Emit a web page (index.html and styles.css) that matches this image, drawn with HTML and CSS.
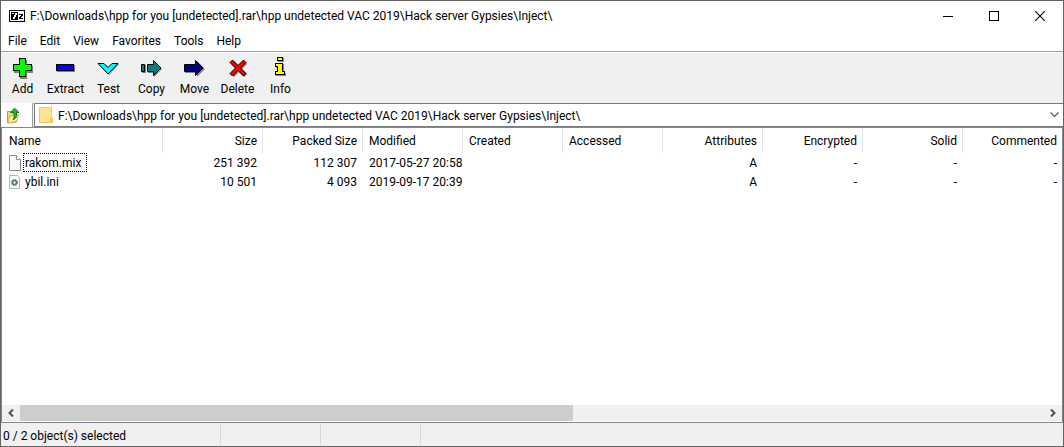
FILE: index.html
```html
<!DOCTYPE html>
<html lang="en">
<head>
<meta charset="utf-8">
<title>7-Zip File Manager</title>
<link rel="stylesheet" href="styles.css">
</head>
<body>
<div class="window">
  <header class="titlebar">
    <svg class="app-icon" width="16" height="12" viewBox="0 0 16 12" shape-rendering="crispEdges">
      <path fill="#000" d="M0 0h16v12H0z"/>
      <path fill="#fff" d="M1 1h14v10H1z"/>
      <path fill="#000" d="M2 2h7v8H2z"/>
      <path fill="#fff" d="M3 3h2v1H3zM6 3h2v2H7v2H6v2H4V7h1V5h1z"/>
      <path fill="#000" d="M10 4h4v2h-1v1h-1v1h2v1h-4V7h1V6h1V5h-2z"/>
    </svg>
    <h1 class="title">F:\Downloads\hpp for you [undetected].rar\hpp undetected VAC 2019\Hack server Gypsies\Inject\</h1>
    <div class="caption-buttons">
      <button class="caption" type="button" aria-label="Minimize"><svg width="10" height="10" viewBox="0 0 10 10" shape-rendering="crispEdges"><path d="M0 5h10v1H0z"/></svg></button>
      <button class="caption" type="button" aria-label="Maximize"><svg width="10" height="10" viewBox="0 0 10 10" shape-rendering="crispEdges"><path d="M.5.5h9v9h-9z" fill="none" stroke="#000"/></svg></button>
      <button class="caption" type="button" aria-label="Close"><svg width="10" height="10" viewBox="0 0 10 10"><path d="M0 0l10 10M10 0L0 10" fill="none" stroke="#000" stroke-width="1.1"/></svg></button>
    </div>
  </header>
  <nav class="menubar">
    <button class="menu" type="button">File</button>
    <button class="menu" type="button">Edit</button>
    <button class="menu" type="button">View</button>
    <button class="menu" type="button">Favorites</button>
    <button class="menu" type="button">Tools</button>
    <button class="menu" type="button">Help</button>
  </nav>
  <div class="toolbar">
    <button class="tool" type="button">
      <svg width="24" height="24" viewBox="1 0 24 24" shape-rendering="crispEdges"><path fill="#808080" d="M10 4h7v6h6v7h-6v6h-7v-6H4v-7h6z"/><path fill="#0f0" stroke="#000" d="M9.500 2.500h6v6h6v6h-6v6h-6v-6h-6v-6h6z"/></svg>Add</button>
    <button class="tool" type="button">
      <svg width="24" height="24" viewBox="1 0 24 24" shape-rendering="crispEdges"><path fill="#808080" d="M4 9h18v7H4z"/><path fill="#00f" stroke="#000" d="M3.500 8.500h17v6h-17z"/></svg>Extract</button>
    <button class="tool" type="button">
      <svg width="24" height="24" viewBox="1 0 24 24"><path fill="#808080" d="M3 8h6l4 4 4-4h6L13 19z"/><path fill="#0ff" stroke="#000" d="M2 7.500h6l4 4 4-4h6L12 18z"/></svg>Test</button>
    <button class="tool" type="button">
      <svg width="24" height="24" viewBox="1 0 24 24"><path fill="#808080" d="M3 9h4v8H3zM9 9h6V5l8 8-8 8v-4H9z"/><path fill="#008080" stroke="#000" d="M2.500 8.500h3v7h-3zM8.500 8.500h6v-4l7.500 7.500-7.500 7.500v-4h-6z"/></svg>Copy</button>
    <button class="tool" type="button">
      <svg width="24" height="24" viewBox="1 0 24 24"><path fill="#808080" d="M3 9h12V5l8 8-8 8v-4H3z"/><path fill="#000080" stroke="#000" d="M2.500 8.500h11v-4l7.500 7.500-7.500 7.500v-4h-11z"/></svg>Move</button>
    <button class="tool" type="button">
      <svg width="24" height="24" viewBox="0 0 24 24"><path fill="#808080" d="M8 5l5 5 5-5 3 3-5 5 5 5-3 3-5-5-5 5-3-3 5-5-5-5z"/><path fill="#f00" stroke="#000" d="M6.500 4L12 9.500 17.500 4 20 6.500 14.500 12l5.500 5.500-2.500 2.500-5.500-5.500L6.500 20 4 17.500 9.500 12 4 6.500z"/></svg>Delete</button>
    <button class="tool" type="button">
      <svg width="24" height="24" viewBox="1 0 24 24" shape-rendering="crispEdges"><path fill="#808080" d="M10 2h6v4h-6zM8 8h8v9h2v3H8v-3h2v-5H8z"/><path fill="#ff0" stroke="#000" d="M9.500 1.500h5v3h-5zM7.500 7.500h7v8h2v3h-9v-3h2v-5h-2z"/></svg>Info</button>
  </div>
  <div class="addressbar">
    <button class="up" type="button" aria-label="Up one level">
      <svg width="16" height="17" viewBox="0 0 16 17"><path fill="#f5d66c" stroke="#c79a35" d="M1.500 4.500h4l1 1.500h4v9l-9 1z"/><path fill="#ffedaa" stroke="#dcb453" d="M3.500 9.500l9-2-1.500 6.500-9 2z"/><path fill="#2eae2b" stroke="#087d18" d="M8.500 1.200l4.500 4.300h-2.500c.5 4-.5 6.500-3.500 7 1.500-1.500 1.500-4 .5-7H4.500z"/></svg>
    </button>
    <div class="combo">
      <svg width="14" height="17" viewBox="0 0 14 17"><path fill="#f0cb62" d="M0 0h13v11h1v5H0z"/><path fill="#ffe391" d="M1 1h11v10h-1v4H1z"/></svg>
      <input class="path" type="text" aria-label="Address" value="F:\Downloads\hpp for you [undetected].rar\hpp undetected VAC 2019\Hack server Gypsies\Inject\">
      <button class="drop" type="button" aria-label="Show history"><svg width="9" height="6" viewBox="0 0 9 6"><path d="M.5.5l4 4 4-4" fill="none" stroke="#555" stroke-width="1.2"/></svg></button>
    </div>
  </div>
  <main class="list">
    <table class="files">
      <colgroup><col class="c-name"><col class="c"><col class="c"><col class="c"><col class="c"><col class="c"><col class="c"><col class="c"><col class="c"><col></colgroup>
      <thead>
        <tr><th>Name</th><th class="r">Size</th><th class="r">Packed Size</th><th>Modified</th><th>Created</th><th>Accessed</th><th class="r">Attributes</th><th class="r">Encrypted</th><th class="r">Solid</th><th class="r">Commented</th></tr>
      </thead>
      <tbody>
        <tr>
          <td><div class="file"><svg width="12" height="16" viewBox="0 0 12 16"><path fill="#fafafa" stroke="#8c8c8c" d="M.5.500h7l4 4v11H.5z"/><path fill="#fff" stroke="#8c8c8c" d="M7.500.500v4h4"/></svg><span class="name focused">rakom.mix</span></div></td>
          <td class="r">251 392</td><td class="r">112 307</td><td>2017-05-27 20:58</td><td></td><td></td><td class="r">A</td><td class="r">-</td><td class="r">-</td><td class="r">-</td>
        </tr>
        <tr>
          <td><div class="file"><svg width="12" height="16" viewBox="0 0 12 16"><path fill="#f7f8f8" stroke="#b4b8ba" d="M.5 1.500h8l2 2v11H.5z"/><circle cx="5.500" cy="8.500" r="2" fill="none" stroke="#587078" stroke-width="1.600"/><circle cx="5.500" cy="8.500" r="3.200" fill="none" stroke="#587078" stroke-dasharray="1.250 1.250"/></svg><span class="name">ybil.ini</span></div></td>
          <td class="r">10 501</td><td class="r">4 093</td><td>2019-09-17 20:39</td><td></td><td></td><td class="r">A</td><td class="r">-</td><td class="r">-</td><td class="r">-</td>
        </tr>
      </tbody>
    </table>
    <div class="scrollbar">
      <button class="arrow" type="button" aria-label="Scroll left"><svg width="6" height="8" viewBox="0 0 6 8"><path d="M5 .5L1.500 4 5 7.500" fill="none" stroke="#505050" stroke-width="2"/></svg></button>
      <div class="track"><div class="thumb"></div></div>
      <button class="arrow" type="button" aria-label="Scroll right"><svg width="6" height="8" viewBox="0 0 6 8"><path d="M1 .5L4.500 4 1 7.500" fill="none" stroke="#505050" stroke-width="2"/></svg></button>
    </div>
  </main>
  <footer class="status">
    <span class="part first">0 / 2 object(s) selected</span><span class="part"></span><span class="part"></span>
  </footer>
</div>
</body>
</html>
```
FILE: styles.css
```css
* { box-sizing: border-box; }
body { margin: 0; background: #fff; color: #000; font: 12px/16px Roboto, "Open Sans", sans-serif; }
button, input { margin: 0; padding: 0; border: 0; border-radius: 0; background: none; color: inherit; font: inherit; }
svg { display: block; flex: none; }
.window { display: flex; flex-direction: column; min-height: 100vh; border: 1px solid #646464; }
.titlebar { display: flex; align-items: center; height: 30px; padding-left: 8px; }
.title { flex: 1; min-width: 0; margin: 0; padding-left: 5px; overflow: hidden; font-size: 12px; font-weight: 400; white-space: nowrap; }
.caption-buttons { display: flex; }
.caption { display: flex; align-items: center; justify-content: center; width: 46px; height: 28px; }
.menubar { display: flex; gap: 13px; height: 21px; padding: 2px 7px 0; border-bottom: 1px solid #a0a0a0; }
.menu { height: 16px; }
.toolbar { display: flex; height: 51px; padding-top: 3px; border-top: 1px solid #fff; background: #f0f0f0; }
.tool { display: flex; flex-direction: column; align-items: center; gap: 1px; width: 43px; white-space: nowrap; }
.addressbar { display: flex; gap: 1px; height: 24px; background: #f0f0f0; }
.up { display: flex; align-items: center; justify-content: center; width: 32px; padding-right: 6px; border-right: 1px solid #a0a0a0; background: #fff; }
.combo { display: flex; flex: 1; align-items: center; min-width: 0; padding-left: 4px; border: 1px solid #7a7a80; border-right: 0; background: #fff; }
.path { flex: 1; min-width: 0; padding: 2px 0 0 5px; outline: 0; }
.drop { display: flex; align-items: center; justify-content: center; width: 17px; height: 22px; }
.list { display: flex; flex: 1; flex-direction: column; justify-content: space-between; border: 1px solid #828790; background: #fff; }
.files { width: 100%; table-layout: fixed; border-collapse: separate; border-spacing: 0; }
.c-name { width: 161px; }
.c { width: 100px; }
.files th { height: 25px; padding: 1px 5px 0 6px; border-right: 1px solid #e5e5e5; font-weight: 400; text-align: left; white-space: nowrap; }
.files th:first-child { padding-left: 7px; }
.files th:last-child { border-right: 0; }
.files td { height: 19px; padding: 0 6px; white-space: nowrap; }
.files .r { text-align: right; }
.files td:last-child { padding-right: 5px; }
.file { display: flex; align-items: center; gap: 2px; padding-left: 1px; }
.name { height: 19px; padding: 0 1px; border: 1px solid transparent; line-height: 18px; }
.focused { padding-right: 5px; border: 1px dotted #000; }
.scrollbar { display: flex; height: 17px; background: #f0f0f0; border-bottom: 1px solid #fff; }
.arrow { display: flex; align-items: center; justify-content: center; width: 18px; }
.track { flex: 1; }
.thumb { width: 54%; height: 16px; background: #cdcdcd; }
.status { display: flex; height: 23px; padding-top: 1px; background: #f0f0f0; }
.part { width: 100px; height: 21px; border-right: 1px solid #d7d7d7; }
.first { width: 220px; padding: 4px 2px 0; }
```
